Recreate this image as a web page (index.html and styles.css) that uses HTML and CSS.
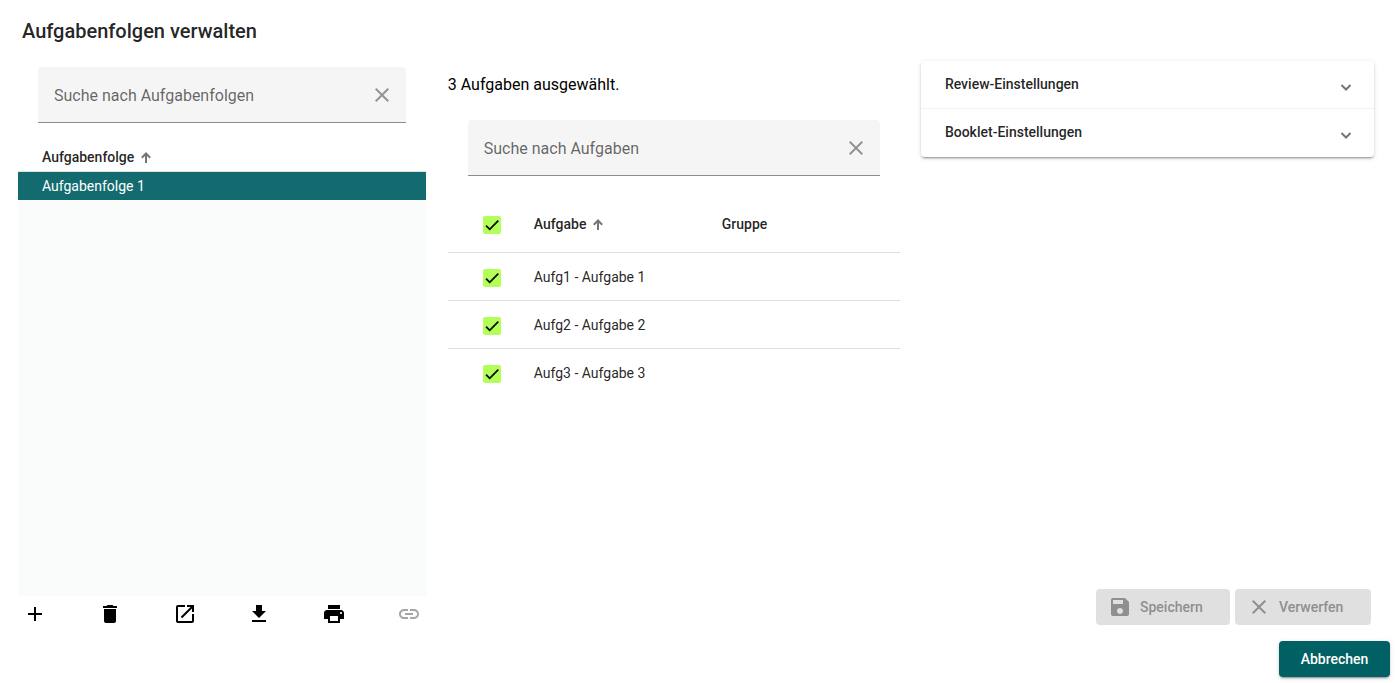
FILE: index.html
```html
<!DOCTYPE html>
<html lang="de">
<head>
<meta charset="utf-8">
<meta name="viewport" content="width=device-width, initial-scale=1">
<title>Aufgabenfolgen verwalten</title>
<link rel="stylesheet" href="styles.css">
</head>
<body>
<div class="dialog">
  <h1 class="dialog-title">Aufgabenfolgen verwalten</h1>
  <main class="columns">
    <section class="sequences">
      <div class="search">
        <input class="search-input" type="text" placeholder="Suche nach Aufgabenfolgen" aria-label="Suche nach Aufgabenfolgen">
        <button class="icon-button clear" type="button" aria-label="Suche leeren"><svg class="icon" viewBox="0 0 24 24"><path d="M19 6.41 17.59 5 12 10.59 6.41 5 5 6.41 10.59 12 5 17.59 6.41 19 12 13.41 17.59 19 19 17.59 13.41 12z"/></svg></button>
      </div>
      <div class="sequence-list">
        <table class="sequence-table">
          <thead><tr><th><span class="sort">Aufgabenfolge<svg class="sort-arrow" viewBox="0 0 10 11"><path d="M5 11V1.5M.8 5.7 5 1.5l4.200 4.200"/></svg></span></th></tr></thead>
          <tbody><tr class="selected"><td>Aufgabenfolge 1</td></tr></tbody>
        </table>
      </div>
      <div class="toolbar">
        <button class="icon-button" type="button" aria-label="Hinzufügen"><svg class="icon" viewBox="0 0 24 24"><path d="M19 13h-6v6h-2v-6H5v-2h6V5h2v6h6z"/></svg></button>
        <button class="icon-button" type="button" aria-label="Löschen"><svg class="icon" viewBox="0 0 24 24"><path d="M6 19c0 1.100.9 2 2 2h8c1.100 0 2-.9 2-2V7H6zM19 4h-3.500l-1-1h-5l-1 1H5v2h14z"/></svg></button>
        <button class="icon-button" type="button" aria-label="Öffnen"><svg class="icon" viewBox="0 0 24 24"><path d="M19 19H5V5h7V3H5c-1.110 0-2 .9-2 2v14c0 1.100.89 2 2 2h14c1.100 0 2-.9 2-2v-7h-2zM14 3v2h3.590l-9.830 9.830 1.410 1.410L19 6.410V10h2V3z"/></svg></button>
        <button class="icon-button" type="button" aria-label="Herunterladen"><svg class="icon" viewBox="0 0 24 24"><path d="M19 9h-4V3H9v6H5l7 7zM5 18v2h14v-2z"/></svg></button>
        <button class="icon-button" type="button" aria-label="Drucken"><svg class="icon" viewBox="0 0 24 24"><path d="M19 8H5c-1.660 0-3 1.340-3 3v6h4v4h12v-4h4v-6c0-1.660-1.340-3-3-3zm-3 11H8v-5h8zm3-7c-.55 0-1-.45-1-1s.45-1 1-1 1 .45 1 1-.45 1-1 1zm-1-9H6v4h12z"/></svg></button>
        <button class="icon-button" type="button" aria-label="Verknüpfen" disabled><svg class="icon" viewBox="0 0 24 24"><path d="M3.900 12c0-1.710 1.390-3.100 3.100-3.100h4V7H7c-2.760 0-5 2.240-5 5s2.240 5 5 5h4v-1.900H7c-1.710 0-3.100-1.390-3.100-3.100zM8 13h8v-2H8zm9-6h-4v1.900h4c1.710 0 3.100 1.390 3.100 3.100s-1.390 3.100-3.100 3.100h-4V17h4c2.760 0 5-2.240 5-5s-2.240-5-5-5z"/></svg></button>
      </div>
    </section>

    <section class="tasks">
      <p class="count">3 Aufgaben ausgewählt.</p>
      <div class="search">
        <input class="search-input" type="text" placeholder="Suche nach Aufgaben" aria-label="Suche nach Aufgaben">
        <button class="icon-button clear" type="button" aria-label="Suche leeren"><svg class="icon" viewBox="0 0 24 24"><path d="M19 6.41 17.59 5 12 10.59 6.41 5 5 6.41 10.59 12 5 17.59 6.41 19 12 13.41 17.59 19 19 17.59 13.41 12z"/></svg></button>
      </div>
      <table class="task-table">
        <colgroup><col class="col-check"><col class="col-task"><col></colgroup>
        <thead>
          <tr>
            <th><label class="check"><input type="checkbox" checked aria-label="Alle auswählen"><svg viewBox="0 0 24 24"><path d="M1.730 12.910 8.100 19.280 22.790 4.590"/></svg></label></th>
            <th><span class="sort">Aufgabe<svg class="sort-arrow" viewBox="0 0 10 11"><path d="M5 11V1.500M.8 5.700 5 1.500l4.200 4.200"/></svg></span></th>
            <th>Gruppe</th>
          </tr>
        </thead>
        <tbody>
          <tr><td><label class="check"><input type="checkbox" checked aria-label="Aufg1 auswählen"><svg viewBox="0 0 24 24"><path d="M1.730 12.910 8.100 19.280 22.790 4.590"/></svg></label></td><td>Aufg1 - Aufgabe 1</td><td></td></tr>
          <tr><td><label class="check"><input type="checkbox" checked aria-label="Aufg2 auswählen"><svg viewBox="0 0 24 24"><path d="M1.730 12.910 8.100 19.280 22.790 4.590"/></svg></label></td><td>Aufg2 - Aufgabe 2</td><td></td></tr>
          <tr><td><label class="check"><input type="checkbox" checked aria-label="Aufg3 auswählen"><svg viewBox="0 0 24 24"><path d="M1.730 12.910 8.100 19.280 22.790 4.590"/></svg></label></td><td>Aufg3 - Aufgabe 3</td><td></td></tr>
        </tbody>
      </table>
    </section>

    <section class="settings">
      <div class="accordion">
        <button class="panel" type="button" aria-expanded="false">Review-Einstellungen<svg class="chevron" viewBox="0 0 12 12"><path d="m1.500 4 4.500 4.500L10.500 4"/></svg></button>
        <button class="panel" type="button" aria-expanded="false">Booklet-Einstellungen<svg class="chevron" viewBox="0 0 12 12"><path d="m1.500 4 4.500 4.500L10.500 4"/></svg></button>
      </div>
      <div class="actions">
        <button class="button save" type="button" disabled><svg class="icon" viewBox="0 0 24 24"><path d="M17 3H5c-1.110 0-2 .9-2 2v14c0 1.100.89 2 2 2h14c1.100 0 2-.9 2-2V7zm-5 16c-1.660 0-3-1.340-3-3s1.340-3 3-3 3 1.340 3 3-1.340 3-3 3zm3-10H5V5h10z"/></svg><span class="label">Speichern</span></button>
        <button class="button discard" type="button" disabled><svg class="icon" viewBox="0 0 24 24"><path d="M19 6.410 17.590 5 12 10.590 6.410 5 5 6.410 10.590 12 5 17.590 6.410 19 12 13.410 17.590 19 19 17.590 13.410 12z"/></svg><span class="label">Verwerfen</span></button>
      </div>
    </section>
  </main>
  <footer class="footer">
    <button class="button primary" type="button">Abbrechen</button>
  </footer>
</div>
</body>
</html>
```
FILE: styles.css
```css
* { box-sizing: border-box; }

body {
  margin: 0;
  background: #fff;
  color: #000;
  font-family: Roboto, "Liberation Sans", sans-serif;
}

button, input { font-family: inherit; }

button {
  border: 0;
  cursor: pointer;
}

.dialog {
  display: flex;
  flex-direction: column;
  min-height: 100vh;
}

.dialog-title {
  margin: 0;
  padding: 15px 22px 13px;
  color: rgba(0, 0, 0, 0.87);
  font-size: 20px;
  font-weight: 500;
  line-height: 32px;
}

.columns {
  flex: 1;
  display: grid;
  grid-template-columns: 9fr 10fr 10fr;
  gap: 21px;
  padding: 0 21px 0 18px;
}

.icon {
  display: block;
  width: 24px;
  height: 24px;
  fill: currentColor;
}

.icon-button {
  display: grid;
  place-items: center;
  width: 34px;
  height: 36px;
  padding: 0;
  background: none;
  color: #000;
}

.icon-button:disabled { color: #a6a6a6; }

.clear {
  width: 48px;
  height: 48px;
  color: #949494;
}

/* Search fields */
.search {
  display: flex;
  align-items: center;
  height: 56px;
  margin: 0 20px;
  border-bottom: 1px solid #8c8c8c;
  border-radius: 4px 4px 0 0;
  background: #f5f5f5;
}

.search-input {
  flex: 1;
  min-width: 0;
  height: 100%;
  padding: 2px 0 0 16px;
  border: 0;
  outline: 0;
  background: none;
  font-size: 16px;
}

.search-input::placeholder {
  color: rgba(0, 0, 0, 0.6);
  opacity: 1;
}

/* Sequence list */
.sequences {
  display: flex;
  flex-direction: column;
  padding-top: 7px;
}

.sequence-list {
  flex: 1;
  margin-top: 20px;
  background: #fafcfc;
}

table {
  width: 100%;
  border-collapse: separate;
  border-spacing: 0;
  color: rgba(0, 0, 0, 0.87);
  font-size: 14px;
  line-height: 20px;
}

th {
  font-weight: 500;
  text-align: left;
}

.sequence-table th {
  height: 29px;
  padding: 0 24px;
  border-bottom: 1px solid #e0e0e0;
  background: #fff;
}

.sequence-table td {
  height: 28px;
  padding: 0 24px;
}

.selected {
  background: #136b6f;
  color: #fff;
}

.sort {
  display: inline-flex;
  align-items: center;
  gap: 7px;
}

.sort-arrow {
  width: 10px;
  height: 11px;
  fill: none;
  stroke: #757575;
  stroke-width: 2;
}

.toolbar {
  display: flex;
  justify-content: space-between;
}

/* Task table */
.tasks { padding-left: 1px; }

.count {
  margin: 0;
  padding: 13px 0 23px;
  font-size: 16px;
  line-height: 24px;
}

.task-table {
  margin-top: 20px;
  table-layout: fixed;
}

.col-check { width: 86px; }
.col-task { width: 188px; }

.task-table th,
.task-table td {
  height: 48px;
  padding: 0;
  border-bottom: 1px solid #e0e0e0;
}

.task-table th { height: 57px; }
.task-table tr:last-child td { border-bottom: 0; }
.task-table thead tr:last-child th { border-bottom: 1px solid #e0e0e0; }

.check {
  display: grid;
  width: 18px;
  height: 18px;
  margin: 2px 0 0 35px;
}

.check input,
.check svg {
  grid-area: 1 / 1;
  width: 18px;
  height: 18px;
  margin: 0;
}

.check input {
  appearance: none;
  border: 2px solid #757575;
  border-radius: 2px;
}

.check input:checked {
  border: 0;
  background: #b2ff59;
}

.check svg {
  visibility: hidden;
  padding: 2px;
  fill: none;
  stroke: #000;
  stroke-width: 3;
  pointer-events: none;
}

.check input:checked + svg { visibility: visible; }

/* Settings */
.settings {
  display: flex;
  flex-direction: column;
  justify-content: space-between;
  padding: 1px 0 7px;
}

.accordion {
  border-radius: 4px;
  box-shadow: 0 3px 1px -2px rgba(0, 0, 0, 0.2), 0 2px 2px rgba(0, 0, 0, 0.14), 0 1px 5px rgba(0, 0, 0, 0.12);
}

.panel {
  display: flex;
  align-items: center;
  justify-content: space-between;
  width: 100%;
  height: 48px;
  padding: 0 22px 2px 24px;
  background: none;
  color: rgba(0, 0, 0, 0.87);
  font-size: 14px;
  font-weight: 500;
  text-align: left;
}

.panel + .panel { box-shadow: 0 -1px #f2f2f2; }

.chevron {
  width: 12px;
  height: 12px;
  margin-top: 5px;
  fill: none;
  stroke: #757575;
  stroke-width: 2;
}

.actions {
  display: flex;
  justify-content: flex-end;
  gap: 5px;
  padding-right: 3px;
}

.button {
  display: flex;
  align-items: center;
  justify-content: center;
  gap: 8px;
  height: 36px;
  padding: 0 12px;
  border-radius: 4px;
  font-size: 14px;
  font-weight: 500;
}

.button:disabled {
  background: #e0e0e0;
  color: #8f8f8f;
}

.save { width: 134px; }
.discard { width: 136px; }

.label {
  flex: 1;
  text-align: left;
}

.footer {
  display: flex;
  justify-content: flex-end;
  padding: 9px 5px 6px;
}

.primary {
  width: 111px;
  background: #006064;
  color: #fff;
  box-shadow: 0 3px 1px -2px rgba(0, 0, 0, 0.2), 0 2px 2px rgba(0, 0, 0, 0.14), 0 1px 5px rgba(0, 0, 0, 0.12);
}
```
